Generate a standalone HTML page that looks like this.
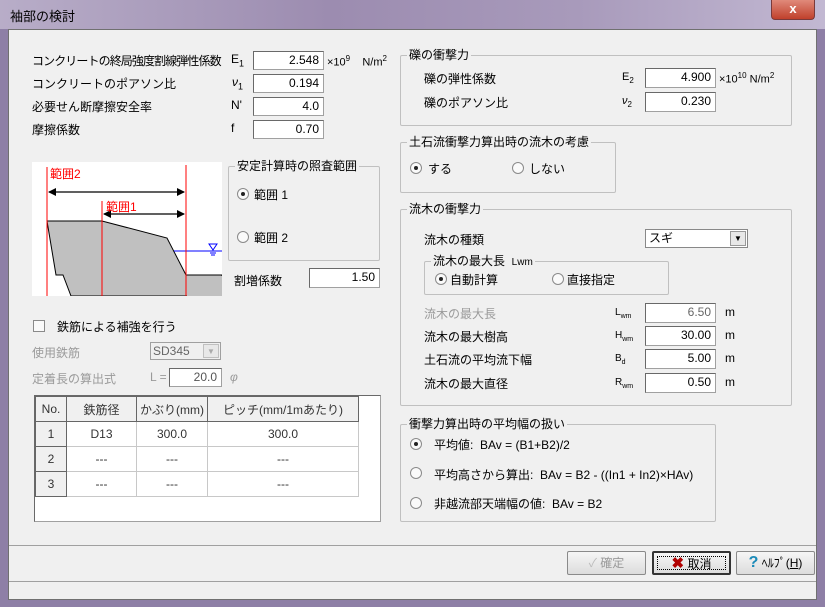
<!DOCTYPE html>
<html><head><meta charset="utf-8"><style>
*{margin:0;padding:0;box-sizing:border-box}
body{width:825px;height:607px;overflow:hidden;background:#8e7fa6;font-family:"Liberation Sans","Noto Sans CJK JP",sans-serif;font-size:12px;color:#000;position:relative}
.a{position:absolute;white-space:nowrap}
.title{left:0;top:0;width:825px;height:29px;background:linear-gradient(90deg,#b8adc8,#9c8cb0 40%,#a89abb 70%,#c2b8d2);}
.client{left:8px;top:29px;width:809px;height:571px;background:#f0f0f0;border:1px solid #707070}
.inp{position:absolute;background:#fff;border:1px solid #a0a0a0;border-top-color:#696969;border-left-color:#696969;text-align:right;padding-right:4px;font-size:12px;line-height:17px}
.grp{position:absolute;border:1px solid #c0c0c0;border-radius:2px}
.grp>span{position:absolute;top:-9px;left:6px;background:#f0f0f0;padding:0 2px;line-height:16px}
.rb{position:absolute;width:12px;height:12px;border-radius:50%;border:1px solid #8a8a8a;background:#fafafa}
.rb.on::after{content:"";position:absolute;left:3px;top:3px;width:4px;height:4px;border-radius:50%;background:#222}
.gray{color:#9a9a9a}
.btn{position:absolute;top:551px;height:24px;width:79px;border:1px solid #8a8a8a;background:linear-gradient(#f6f6f6,#dcdcdc);border-radius:2px;text-align:center;line-height:22px}
table{border-collapse:collapse}
td{border:1px solid #c8c8c8;height:25px;text-align:center;font-size:12px;color:#333}
</style></head><body>
<div class="a title"></div>
<div class="a" style="left:10px;top:6px;font-size:13px">袖部の検討</div>
<div class="a" style="left:771px;top:0;width:44px;height:20px;background:linear-gradient(#e08a7a,#c0402c);border:1px solid #7a3a3a;border-top:none;border-radius:0 0 4px 4px;color:#fff;font-weight:bold;text-align:center;line-height:18px;font-size:13px">x</div>
<div class="a client"></div>
<div class="a" style="left:9px;top:545px;width:807px;border-top:1px solid #a0a0a0"></div>
<div class="a" style="left:9px;top:581px;width:807px;border-top:1px solid #a0a0a0"></div>

<div class="a" style="left:32px;top:52px;letter-spacing:-0.9px">コンクリートの終局強度割線弾性係数</div>
<div class="a" style="left:231px;top:52px">E<sub style="font-size:9px">1</sub></div>
<div class="inp" style="left:253px;top:51px;width:71px;height:19px">2.548</div>
<div class="a" style="left:327px;top:54px;font-size:11px">×10<sup style="font-size:8px">9</sup>&nbsp;&nbsp;&nbsp; N/m<sup style="font-size:8px">2</sup></div>
<div class="a" style="left:32px;top:75px">コンクリートのポアソン比</div>
<div class="a" style="left:232px;top:75px;font-style:italic">ν<sub style="font-size:9px;font-style:normal">1</sub></div>
<div class="inp" style="left:253px;top:74px;width:71px;height:19px">0.194</div>
<div class="a" style="left:32px;top:98px">必要せん断摩擦安全率</div>
<div class="a" style="left:231px;top:98px">N'</div>
<div class="inp" style="left:253px;top:97px;width:71px;height:19px">4.0</div>
<div class="a" style="left:32px;top:121px">摩擦係数</div>
<div class="a" style="left:231px;top:121px">f</div>
<div class="inp" style="left:253px;top:120px;width:71px;height:19px">0.70</div>

<svg class="a" style="left:32px;top:162px" width="190" height="134" viewBox="32 162 190 134">
<rect x="32" y="162" width="190" height="134" fill="#fff"/>
<polygon points="47,221 102,221 167,238 186,275 222,275 222,296 71,296 63,275 56,275" fill="#c0c0c0" stroke="#000" stroke-width="1"/>
<rect x="187" y="276" width="36" height="21" fill="#c0c0c0"/>
<line x1="174" y1="251" x2="222" y2="251" stroke="#0000ff"/>
<polygon points="209,244 217,244 213,250" fill="none" stroke="#0000ff"/>
<line x1="210" y1="253" x2="216" y2="253" stroke="#0000ff"/><line x1="211" y1="255" x2="215" y2="255" stroke="#0000ff"/>
<line x1="47" y1="167" x2="47" y2="296" stroke="#ff0000"/>
<line x1="102" y1="201" x2="102" y2="296" stroke="#ff0000"/>
<line x1="186" y1="165" x2="186" y2="296" stroke="#ff0000"/>
<line x1="49" y1="192" x2="184" y2="192" stroke="#000" stroke-width="1.3"/>
<polygon points="48,192 56,188 56,196"/><polygon points="185,192 177,188 177,196"/>
<line x1="104" y1="214" x2="184" y2="214" stroke="#000" stroke-width="1.3"/>
<polygon points="103,214 111,210 111,218"/><polygon points="185,214 177,210 177,218"/>
<text x="50" y="178" fill="#ff0000" font-size="12" font-family="Liberation Sans,Noto Sans CJK JP,sans-serif">範囲2</text>
<text x="106" y="211" fill="#ff0000" font-size="12" font-family="Liberation Sans,Noto Sans CJK JP,sans-serif">範囲1</text>
</svg>

<div class="grp" style="left:228px;top:166px;width:152px;height:95px"><span>安定計算時の照査範囲</span></div>
<div class="rb on" style="left:237px;top:188px"></div><div class="a" style="left:254px;top:186px">範囲 1</div>
<div class="rb" style="left:237px;top:231px"></div><div class="a" style="left:254px;top:229px">範囲 2</div>
<div class="a" style="left:234px;top:272px">割増係数</div>
<div class="inp" style="left:309px;top:268px;width:71px;height:20px">1.50</div>

<div class="a" style="left:33px;top:320px;width:12px;height:12px;border:1px solid #8a8a8a;background:#fafafa"></div>
<div class="a" style="left:57px;top:318px">鉄筋による補強を行う</div>
<div class="a gray" style="left:32px;top:344px">使用鉄筋</div>
<div class="a" style="left:150px;top:342px;width:71px;height:18px;border:1px solid #a0a0a0;background:#f0f0f0;color:#666;padding-left:2px;line-height:16px">SD345</div>
<div class="a" style="left:203px;top:344px;width:16px;height:14px;border:1px solid #c0c0c0;background:#e8e8e8;color:#aaa;font-size:8px;text-align:center;line-height:13px">▼</div>
<div class="a gray" style="left:32px;top:370px">定着長の算出式</div>
<div class="a gray" style="left:150px;top:370px">L =</div>
<div class="inp" style="left:169px;top:368px;width:53px;height:19px;color:#555">20.0</div>
<div class="a gray" style="left:230px;top:370px;font-style:italic">φ</div>

<div class="a" style="left:34px;top:395px;width:347px;height:127px;background:#fff;border:1px solid #a0a0a0;border-top-color:#696969;border-left-color:#696969"></div>
<table class="a" style="left:35px;top:396px">
<tr style="background:#f0f0f0"><td style="width:31px;height:24px;border-color:#666">No.</td><td style="width:70px;border-color:#666">鉄筋径</td><td style="width:71px;border-color:#666">かぶり(mm)</td><td style="width:151px;border-color:#666">ピッチ(mm/1mあたり)</td></tr>
<tr><td style="background:#f0f0f0;border-color:#666">1</td><td>D13</td><td>300.0</td><td>300.0</td></tr>
<tr><td style="background:#f0f0f0;border-color:#666">2</td><td>---</td><td>---</td><td>---</td></tr>
<tr><td style="background:#f0f0f0;border-color:#666">3</td><td>---</td><td>---</td><td>---</td></tr>
</table>

<div class="grp" style="left:400px;top:55px;width:392px;height:71px"><span>礫の衝撃力</span></div>
<div class="a" style="left:424px;top:70px">礫の弾性係数</div>
<div class="a" style="left:622px;top:71px;font-size:11px">E<sub style="font-size:8px">2</sub></div>
<div class="inp" style="left:645px;top:68px;width:71px;height:20px">4.900</div>
<div class="a" style="left:719px;top:71px;font-size:11px">×10<sup style="font-size:8px">10</sup> N/m<sup style="font-size:8px">2</sup></div>
<div class="a" style="left:424px;top:94px">礫のポアソン比</div>
<div class="a" style="left:622px;top:95px;font-style:italic;font-size:11px">ν<sub style="font-size:8px;font-style:normal">2</sub></div>
<div class="inp" style="left:645px;top:92px;width:71px;height:20px">0.230</div>

<div class="grp" style="left:400px;top:142px;width:216px;height:51px"><span>土石流衝撃力算出時の流木の考慮</span></div>
<div class="rb on" style="left:410px;top:162px"></div><div class="a" style="left:428px;top:160px">する</div>
<div class="rb" style="left:512px;top:162px"></div><div class="a" style="left:529px;top:160px">しない</div>

<div class="grp" style="left:400px;top:209px;width:392px;height:197px"><span>流木の衝撃力</span></div>
<div class="a" style="left:424px;top:231px">流木の種類</div>
<div class="a" style="left:645px;top:229px;width:103px;height:19px;background:#fff;border:1px solid #888;padding-left:3px;line-height:17px">スギ</div>
<div class="a" style="left:730px;top:231px;width:16px;height:15px;border:1px solid #999;background:#e8e8e8;font-size:8px;text-align:center;line-height:14px">▼</div>
<div class="grp" style="left:424px;top:261px;width:245px;height:34px"><span>流木の最大長&nbsp; <small>Lwm</small></span></div>
<div class="rb on" style="left:435px;top:273px"></div><div class="a" style="left:450px;top:271px">自動計算</div>
<div class="rb" style="left:552px;top:273px"></div><div class="a" style="left:567px;top:271px">直接指定</div>
<div class="a gray" style="left:424px;top:305px">流木の最大長</div>
<div class="a" style="left:615px;top:307px;font-size:10px">L<sub style="font-size:7px">wm</sub></div>
<div class="inp" style="left:645px;top:303px;width:71px;height:20px;color:#666">6.50</div><div class="a" style="left:725px;top:305px">m</div>
<div class="a" style="left:424px;top:328px">流木の最大樹高</div>
<div class="a" style="left:615px;top:330px;font-size:10px">H<sub style="font-size:7px">wm</sub></div>
<div class="inp" style="left:645px;top:326px;width:71px;height:20px">30.00</div><div class="a" style="left:725px;top:328px">m</div>
<div class="a" style="left:424px;top:351px">土石流の平均流下幅</div>
<div class="a" style="left:615px;top:353px;font-size:10px">B<sub style="font-size:7px">d</sub></div>
<div class="inp" style="left:645px;top:349px;width:71px;height:20px">5.00</div><div class="a" style="left:725px;top:351px">m</div>
<div class="a" style="left:424px;top:375px">流木の最大直径</div>
<div class="a" style="left:615px;top:377px;font-size:10px">R<sub style="font-size:7px">wm</sub></div>
<div class="inp" style="left:645px;top:373px;width:71px;height:20px">0.50</div><div class="a" style="left:725px;top:375px">m</div>

<div class="grp" style="left:400px;top:424px;width:316px;height:98px"><span>衝撃力算出時の平均幅の扱い</span></div>
<div class="rb on" style="left:410px;top:438px"></div><div class="a" style="left:434px;top:436px">平均値:&nbsp; BAv = (B1+B2)/2</div>
<div class="rb" style="left:410px;top:467px"></div><div class="a" style="left:434px;top:466px">平均高さから算出:&nbsp; BAv = B2 - ((In1 + In2)×HAv)</div>
<div class="rb" style="left:410px;top:497px"></div><div class="a" style="left:434px;top:495px">非越流部天端幅の値:&nbsp; BAv = B2</div>

<div class="btn" style="left:567px;color:#999"><span style="color:#bbb">✓</span> 確定</div>
<div class="btn" style="left:652px;border:2px solid #333;"><div style="position:absolute;left:3px;top:3px;right:3px;bottom:3px;border:1px dotted #000"></div><span style="color:#b00000;font-weight:bold;font-size:15px">✖</span> 取消</div>
<div class="btn" style="left:736px"><span style="color:#1a8ab8;font-weight:bold;font-size:16px">?</span> ﾍﾙﾌﾟ(<u>H</u>)</div>
</body></html>
